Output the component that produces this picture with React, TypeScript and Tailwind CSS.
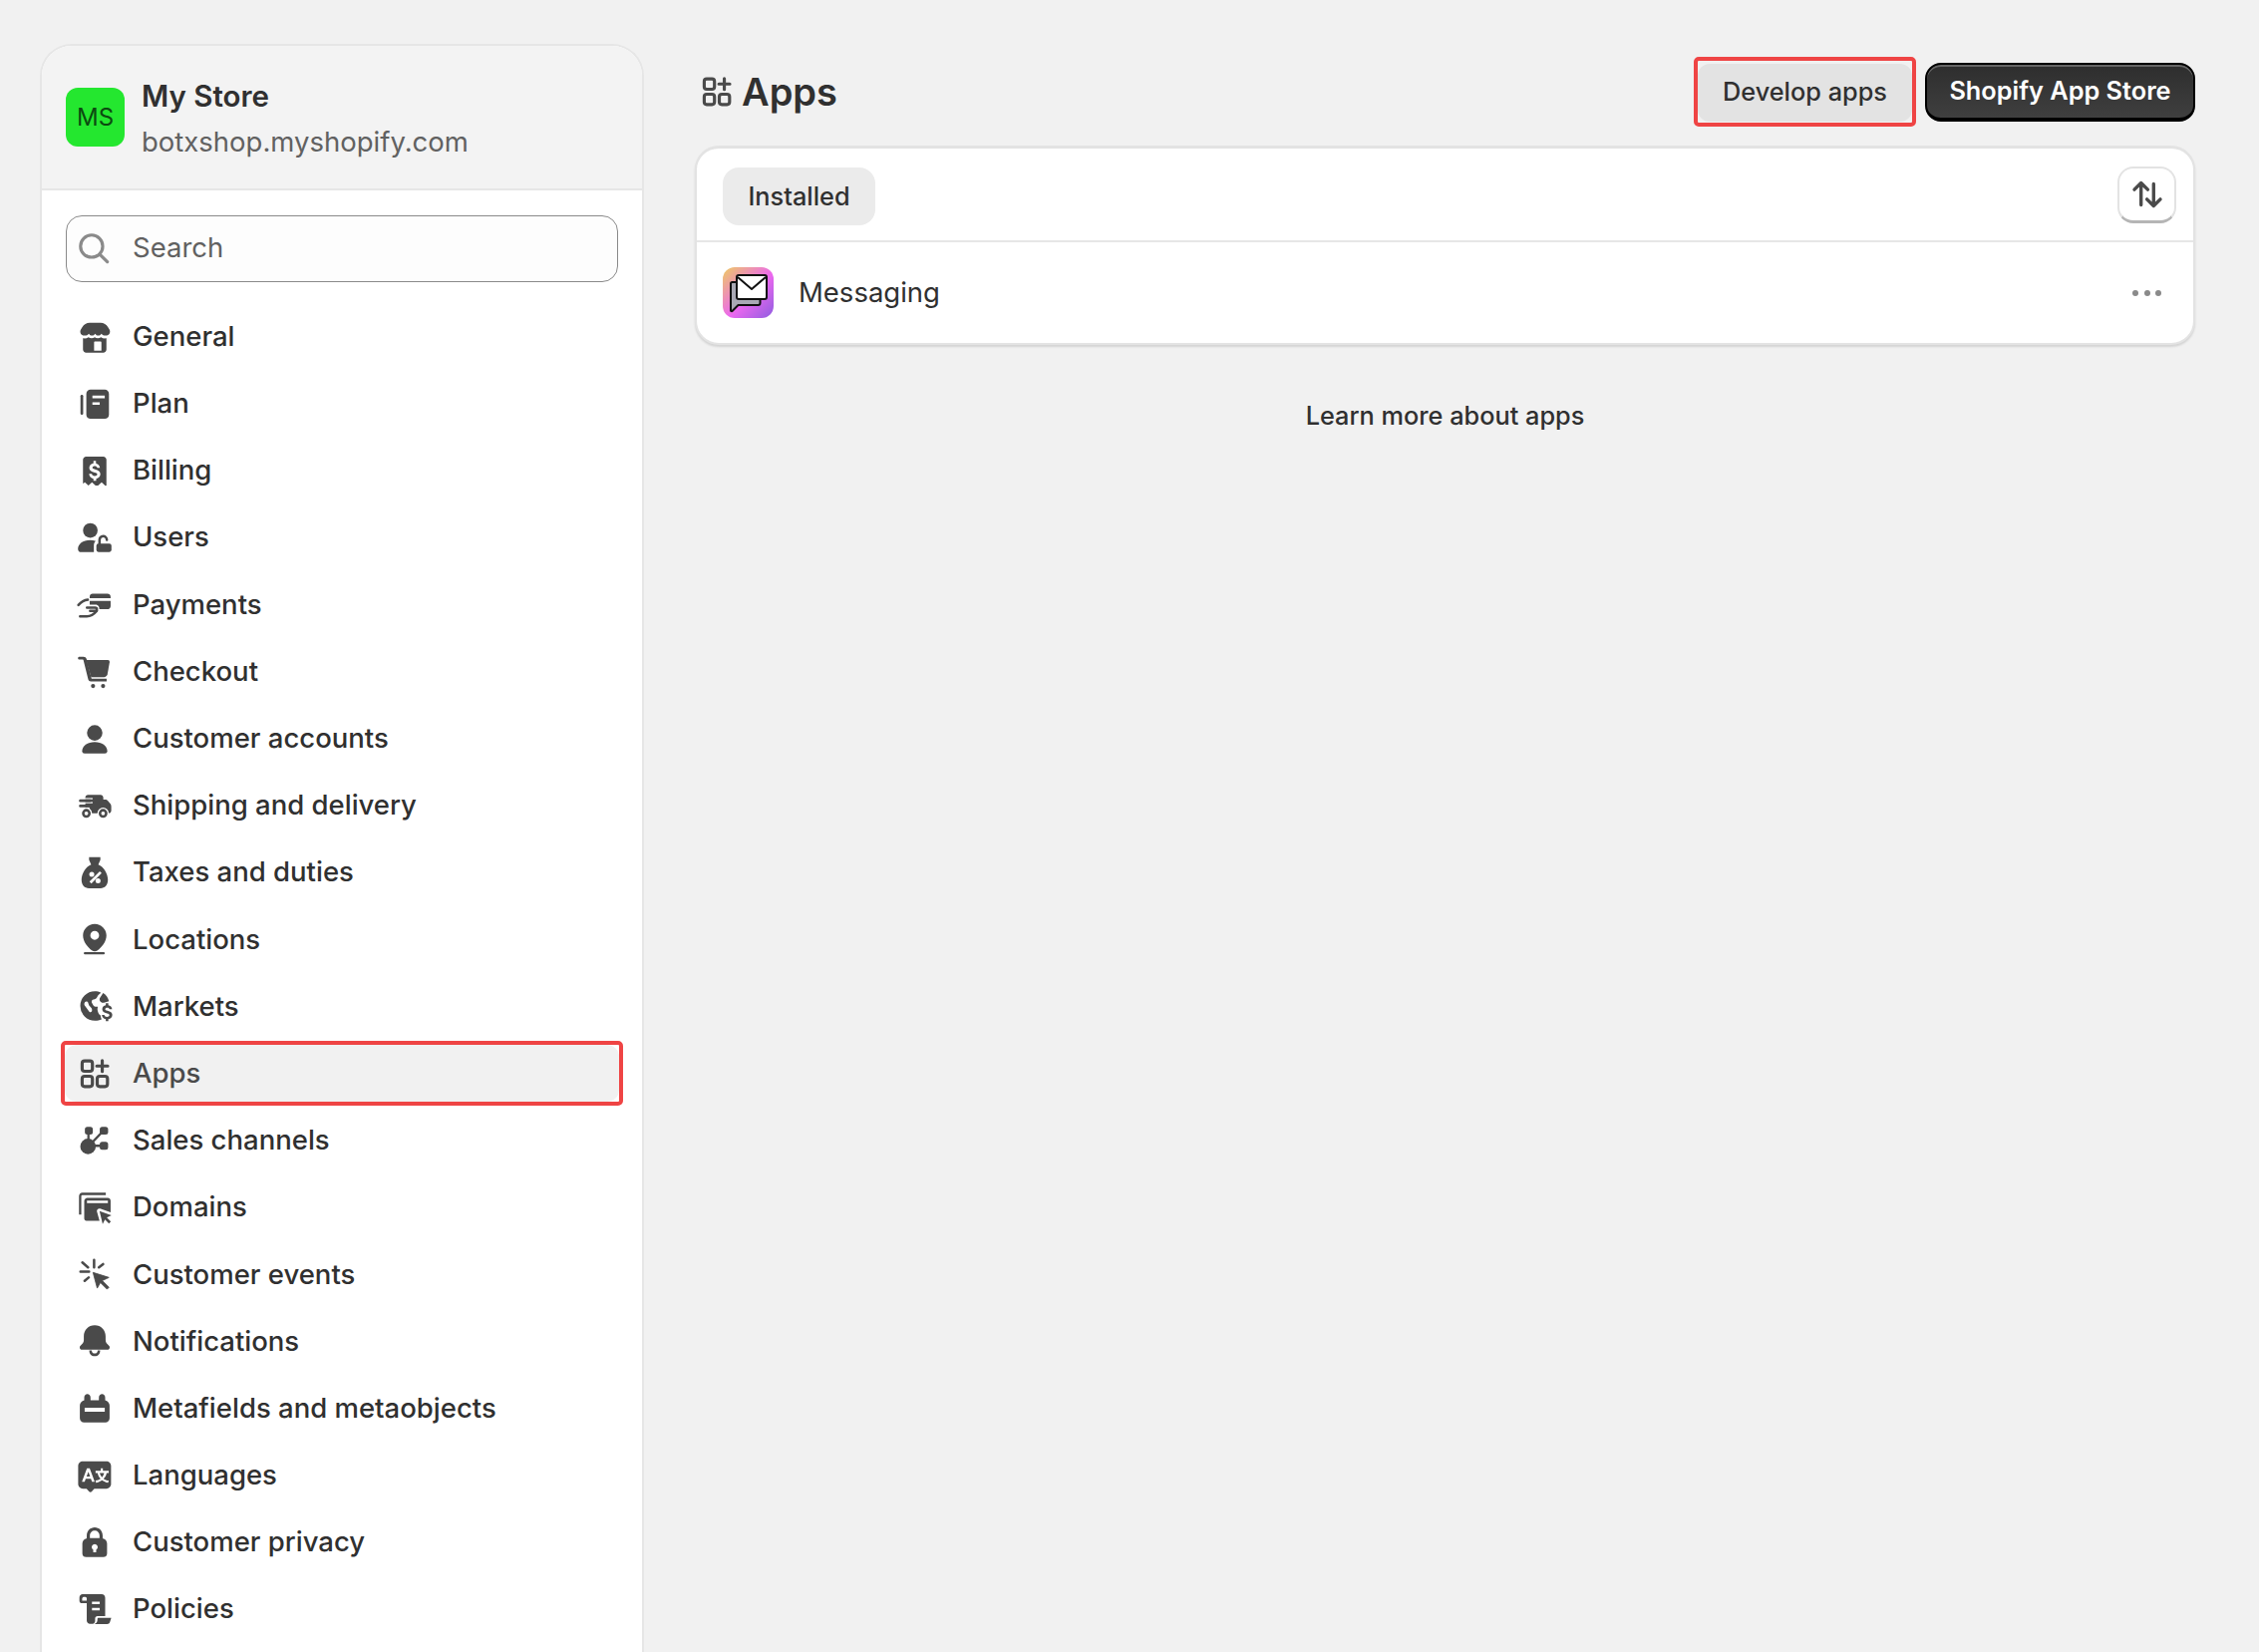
import type { ReactNode } from "react";

function Icon({ children, className = "" }: { children: ReactNode; className?: string }) {
  return (
    <svg viewBox="0 0 20 20" fill="#4a4a4a" className={`w-[42px] h-[42px] shrink-0 ${className}`}>
      {children}
    </svg>
  );
}

const AppsGlyph = (
  <g fill="none" stroke="#4a4a4a" strokeWidth="1.5" strokeLinecap="round" strokeLinejoin="round">
    <rect x="4" y="3.9" width="4.9" height="4.9" rx="1.2" />
    <rect x="4" y="11.2" width="4.9" height="4.9" rx="1.2" />
    <rect x="11.2" y="11.2" width="4.9" height="4.9" rx="1.2" />
    <path d="M13.6 3.7v5.2M11 6.3h5.2" />
  </g>
);

const icons: Record<string, ReactNode> = {
  General: (
    <>
      <path d="M7.2 3.200h5.600c1.500 0 2.800.8 3.500 2l.8 1.300c.6 1.300-.2 2.700-1.700 2.800-.9.100-1.700-.3-2.200-.9-.4.6-.9.9-1.500.9s-1.100-.3-1.500-.9c-.4.6-.9.9-1.500.9s-1.100-.3-1.500-.9c-.5.6-1.300 1-2.200.9-1.500-.1-2.300-1.500-1.700-2.800l.8-1.300c.7-1.200 2-2 3.500-2z" />
      <path fillRule="evenodd" d="M4.400 10.600c1 .2 1.900 0 2.600-.5.900.7 2.200.7 3 0 .8.700 2.100.7 3 0 .7.500 1.600.7 2.600.5V16c0 .8-.7 1.500-1.500 1.500H5.900c-.8 0-1.500-.7-1.500-1.500v-5.400zM9.700 12.700v3.800h3.500v-3.800c0-.3-.2-.5-.5-.5h-2.500c-.3 0-.5.2-.5.5z" />
    </>
  ),
  Plan: (
    <>
      <rect x="3.2" y="5.7" width="1.3" height="9.5" rx=".6" />
      <path fillRule="evenodd" d="M8 3.200h6.800c1.100 0 2 .9 2 2v10c0 1.100-.9 2-2 2H8c-1.100 0-2-.9-2-2v-10c0-1.100.9-2 2-2zm.9 2.900v1.300h5.900V6.100H8.900zm0 3.200v1.200h3.500V9.300H8.900z" />
    </>
  ),
  Billing: (
    <path fillRule="evenodd" d="M5.900 3.300h8.200c.8 0 1.500.7 1.500 1.500v12.300l-.5.200-1.800-1.700-1.700 1.600h-1.200L8.700 15.600 7 17.200l-1.700-1.600-.6.500-.3.100V4.800c0-.8.700-1.500 1.500-1.500zm4.800 2.100H9.400v1.100c-1.200.2-2 1.100-2 2.200 0 1.300 1 1.900 2.600 2.300.9.200 1.200.4 1.200.8 0 .5-.5.800-1.200.8s-1.300-.3-1.400-1H7.300c.1 1.300.9 2 2.100 2.300v1h1.300v-1c1.200-.2 2-1.100 2-2.200 0-1.300-1-1.900-2.600-2.300-.9-.2-1.200-.4-1.200-.8 0-.5.500-.8 1.100-.8.700 0 1.100.3 1.200.9h1.300c-.1-1.200-.9-1.900-1.900-2.200V5.400z" />
  ),
  Users: (
    <>
      <circle cx="7.900" cy="6.700" r="3.500" />
      <path d="M2 15.500c0-2.300 2.300-4.200 5.800-4.200 1 0 1.900.2 2.700.5-.6.500-.9 1.200-.9 2v3.200H3.100C2.500 17 2 16.400 2 15.500z" />
      <path d="M12.300 13.500v-2.300c0-1 .7-1.800 1.700-1.800s1.800.8 1.800 1.800" fill="none" stroke="#4a4a4a" strokeWidth="1.2" strokeLinecap="round" />
      <rect x="10.800" y="13" width="7.200" height="4" rx="1" />
    </>
  ),
  Payments: (
    <>
      <path d="M9 5h7.100c.8 0 1.500.6 1.500 1.500v.7H7.600v-.7C7.600 5.600 8.200 5 9 5zM7.600 8.400h10v2.500c0 .8-.7 1.500-1.500 1.500h-3.900c.1-.9-.4-2.200-1.800-2.200H7.600V8.400z" />
      <g fill="none" stroke="#4a4a4a" strokeWidth="1.2" strokeLinecap="round" strokeLinejoin="round">
        <path d="M2.200 10.400C3.500 9 5.100 8.100 6.700 7.900" />
        <path d="M6.300 11.700h3.900c1.100 0 1.100 1.500 0 1.500H7.800" />
        <path d="M3 15.800h3.200c1.700 0 3.300-.8 4.800-2.600" />
      </g>
    </>
  ),
  Checkout: (
    <>
      <path d="M2.600 3.200h2c.7 0 1.300.4 1.500 1.100l2.400 9.400h7.200V15H8.100c-.6 0-1-.3-1.200-.9L4.600 4.800c0-.2-.1-.3-.3-.3H2.600c-.4 0-.6-.3-.6-.6s.2-.7.600-.7z" />
      <path d="M5.900 4.800h10.400c.5 0 .9.400.8 1l-1 5.800c-.2.800-.9 1.400-1.700 1.400H8.300L5.900 4.800z" />
      <circle cx="9.200" cy="17.200" r="1" />
      <circle cx="14" cy="17.200" r="1" />
    </>
  ),
  "Customer accounts": (
    <>
      <circle cx="10" cy="7.200" r="3.700" />
      <path d="M4 15.800c0-2.400 2.600-4.300 6-4.300s6 1.900 6 4.300c0 .8-.5 1.200-1.200 1.200H5.200C4.500 17 4 16.600 4 15.800z" />
    </>
  ),
  "Shipping and delivery": (
    <>
      <path d="M6.800 4.900h6c.7 0 1.300.6 1.300 1.300v.9h.9c.5 0 1 .2 1.300.6l1.200 1.500c.3.400.4.800.4 1.200v2c0 .7-.5 1.300-1.200 1.300H5.500V6.200c0-.7.600-1.300 1.300-1.300z" />
      <rect x="4.800" y="6.400" width="4.200" height=".6" fill="#fff" />
      <rect x="4.800" y="8.300" width="4.200" height=".6" fill="#fff" />
      <rect x="4.800" y="10.900" width="2.700" height=".6" fill="#fff" />
      <rect x="2.500" y="7" width="5.900" height="1.300" rx=".6" />
      <rect x="2.500" y="9.500" width="4" height="1.300" rx=".6" />
      <circle cx="6" cy="13.700" r="2.700" fill="#fff" />
      <circle cx="14" cy="13.700" r="2.700" fill="#fff" />
      <circle cx="6" cy="13.700" r="1.500" fill="none" stroke="#4a4a4a" strokeWidth="1.200" />
      <circle cx="14" cy="13.700" r="1.500" fill="none" stroke="#4a4a4a" strokeWidth="1.200" />
    </>
  ),
  "Taxes and duties": (
    <path fillRule="evenodd" d="M7.300 2.700h5.400v1.400l-1 2.200c2.500.9 4.600 4.300 4.600 7.300 0 2.500-1.500 4-3.500 4H7.200c-2 0-3.500-1.500-3.500-4 0-3 2.100-6.400 4.600-7.300l-1-2.200V2.700zm5.100 6.800-4.900 4.900.9.900 4.900-4.900-.9-.9zM8.600 9.800a1.200 1.200 0 1 0 0 2.400 1.200 1.200 0 0 0 0-2.400zm3 3a1.200 1.200 0 1 0 0 2.400 1.200 1.200 0 0 0 0-2.400z" />
  ),
  Locations: (
    <>
      <path fillRule="evenodd" d="M10 2.700c3.100 0 5.600 2.500 5.600 5.500 0 2.900-2.200 5.700-4.400 7.300-.7.500-1.700.5-2.400 0-2.200-1.600-4.400-4.400-4.400-7.300 0-3 2.500-5.500 5.600-5.500zm0 3.400a2.100 2.100 0 1 0 0 4.200 2.100 2.100 0 0 0 0-4.200z" />
      <rect x="4.800" y="16.200" width="10" height="1.100" rx=".5" />
    </>
  ),
  Markets: (
    <>
      <path d="M10 3c1.100 0 2.100.2 3 .7-.8.500-1.500 1.300-1.800 2-.3.800-1 1.100-1.700 1.200-.9.100-1.200 1-.8 1.700l.6 1c.3.500.9.700 1.500.7h.7c-.2.700-.3 1.500 0 2.300.2.800.6 1.500 1.300 1.900.1.700.2 1.300.5 1.900-1 .4-2 .6-3.200.6a7 7 0 1 1 0-14zM5.400 8.100c-.5.500-.5 1.300-.1 1.800l2.100 2.800c.4.500 1.300.3 1.300-.4v-.6c0-.4-.2-.7-.4-.9l-1-1-.5-1.500c-.2-.5-1-.7-1.400-.2z" />
      <path d="M14 3.800c1.500.9 2.400 2.200 2.800 3.900l-2.400.7c-.7.200-1.500-.1-1.900-.8-.3-.6-.2-1.300.2-1.800L14 3.800z" />
      <path d="M15.300 8.700h1.200v1c1 .2 1.700.9 1.800 1.900h-1.200c-.1-.5-.5-.8-1.100-.8-.6 0-1 .3-1 .7 0 .4.300.6 1.100.8 1.500.4 2.300.9 2.300 2 0 1-.7 1.800-1.900 2v1h-1.200v-1c-1.100-.2-1.800-.9-1.900-2h1.200c.1.600.6.900 1.200.9.700 0 1.200-.3 1.200-.8 0-.4-.3-.6-1.100-.8-1.500-.4-2.300-.9-2.300-2 0-1 .7-1.700 1.700-1.900v-1z" />
    </>
  ),
  Apps: AppsGlyph,
  "Sales channels": (
    <>
      <rect x="5.300" y="3.400" width="3.800" height="3.800" rx="1.200" />
      <rect x="12.400" y="3.400" width="4" height="3.800" rx="1.200" />
      <rect x="12.400" y="10.600" width="4" height="3.800" rx="1.200" />
      <circle cx="6.800" cy="12.800" r="3.700" />
      <path d="M7 5v7.500M7 12.800 14 5.500M7 12.500h7" fill="none" stroke="#4a4a4a" strokeWidth="1.100" />
    </>
  ),
  Domains: (
    <>
      <path d="M4.100 3h11.200v1.200H4.100a.5.500 0 0 0-.5.500v8.800H2.500V4.700C2.500 3.800 3.200 3 4.100 3z" />
      <path fillRule="evenodd" d="M6.500 5.500h9.700c.8 0 1.400.6 1.400 1.400v5.500l-5-1.800c-.9-.3-1.800.6-1.500 1.500l1.200 4.300H6c-.6 0-1-.4-1-1V7c0-.8.700-1.500 1.500-1.500zm-.2 1.300V8h10V6.800h-10z" />
      <path d="M12.300 11.800 18 13.800l-2.200 1.100 1.900 1.900-.9.900-1.900-1.900-1.100 2.200-1.500-6.200z" />
    </>
  ),
  "Customer events": (
    <>
      <path d="m9.200 9.200 7.600 2.400-3.200 1.500 3.200 3.200-.9.900-3.200-3.200-1.500 2.700-2-7.500z" stroke="#4a4a4a" strokeWidth=".4" strokeLinejoin="round" />
      <path d="M9.700 3.200v3.600M3.200 8.800h4.100M4.100 4.400l2.700 2.400M14 5.200l-2 1.600M5.200 13.200l1.900-1.600" fill="none" stroke="#4a4a4a" strokeWidth="1.200" strokeLinecap="round" />
    </>
  ),
  Notifications: (
    <>
      <path d="M10 2.500c3 0 5.200 2.300 5.200 5.200v1.800c0 .8.300 1.400.8 1.900l.9 1c.6.700.1 1.800-.8 1.800H3.900c-.9 0-1.400-1.100-.8-1.800l.9-1c.5-.5.800-1.100.8-1.900V7.700c0-2.900 2.200-5.200 5.200-5.200z" />
      <path d="M7.400 14.500h1.200c0 1 .5 1.500 1.400 1.500s1.400-.5 1.400-1.500h1.200c0 1.800-1 2.800-2.600 2.800s-2.600-1-2.600-2.800z" />
    </>
  ),
  "Metafields and metaobjects": (
    <path fillRule="evenodd" d="M5 6V4.600C5 3.600 5.700 3 6.500 3s1.500.6 1.500 1.600V6h4V4.600c0-1 .7-1.600 1.500-1.600S15 3.600 15 4.600V6c1.200.3 2.100 1.300 2.100 2.500v6c0 1.200-.9 2-2 2H4.900c-1.100 0-2-.8-2-2v-6C2.900 7.300 3.800 6.300 5 6zm.2 3.500v1.900h9.600V9.500H5.200z" />
  ),
  Languages: (
    <path fillRule="evenodd" d="M4.300 3.200h11.300c1.200 0 2.200 1 2.200 2.200v8.700c0 1.200-1 2.200-2.200 2.200h-5.800l-1.300 1.400c-.3.300-.8.300-1.100 0l-1.300-1.400H4.300c-1.200 0-2.200-1-2.200-2.200V5.400c0-1.200 1-2.200 2.200-2.200zm3.300 3.300H6.300L3.900 13h1.300l.5-1.500h2.500l.5 1.500H10L7.600 6.500zm-.6 1.700.8 2.300H6.100l.9-2.300zm6.900-1.700H12.900v1.200H10.400v1.100h1c.2 1.100.7 2 1.400 2.700-.7.500-1.500.8-2.400.9l.2 1.100c1.100-.2 2.100-.6 2.900-1.200.8.600 1.800 1 2.900 1.200l.3-1.100c-1-.1-1.800-.4-2.500-.9.800-.7 1.300-1.600 1.500-2.700h1V7.700h-2.800V6.500zm.6 2.300c-.2.800-.5 1.400-1 2-.5-.6-.9-1.200-1.100-2h2.100z" />
  ),
  "Customer privacy": (
    <path fillRule="evenodd" d="M6.200 8.100V6.800c0-2.200 1.700-3.900 3.800-3.900s3.800 1.700 3.800 3.900v1.300c1.200.2 2.100 1.300 2.100 2.500v4.700c0 1.100-.8 1.700-1.800 1.700H5.900c-1 0-1.800-.6-1.800-1.700v-4.700c0-1.200.9-2.300 2.100-2.500zm1.500-.1h4.600V6.800c0-1.400-1-2.400-2.300-2.400S7.700 5.400 7.700 6.800V8zM10 10.800a1.500 1.500 0 0 0-.7 2.800v1.200h1.400v-1.200a1.500 1.500 0 0 0-.7-2.800z" />
  ),
  Policies: (
    <>
      <path fillRule="evenodd" d="M4.200 2.900h9.100c1 0 1.700.8 1.700 1.700v8.700h-3.600c-.8 0-1.200.6-1.200 1.100v1.200c0 .6-.3 1.200-1 1.400H7.700c-.8 0-1.500-.7-1.500-1.500V7.200H4c-.8 0-1.300-.5-1.300-1.300V4.500c0-.9.700-1.600 1.500-1.600zm.5 1.300c-.4.200-.7.500-.7.900v.9h2.200V5c0-.4-.3-.8-.7-.8h-.8zm4 2.200v1.200h3.700V6.400H8.700zm0 3v1.200h3.700V9.400H8.700z" />
      <path d="M11.900 14.200h6l-.6 1.900c-.2.600-.7 1.100-1.400 1.100H9.900c.8-.5 1.400-1.100 1.400-2v-.4c0-.4.200-.6.600-.6z" />
    </>
  ),
};

const navItems = [
  "General",
  "Plan",
  "Billing",
  "Users",
  "Payments",
  "Checkout",
  "Customer accounts",
  "Shipping and delivery",
  "Taxes and duties",
  "Locations",
  "Markets",
  "Apps",
  "Sales channels",
  "Domains",
  "Customer events",
  "Notifications",
  "Metafields and metaobjects",
  "Languages",
  "Customer privacy",
  "Policies",
];

function NavRow({ label }: { label: string }) {
  if (label === "Apps") {
    return (
      <div className="-mx-[5px] -my-[4.5px] border-4 border-[#ef4444] rounded-[5px]">
        <div className="flex items-center gap-[17px] h-[57px] pl-[9px] rounded-[12px] bg-[#f1f1f1] text-[#4a4a4a]">
          <Icon>{icons[label]}</Icon>
          <span>{label}</span>
        </div>
      </div>
    );
  }
  return (
    <div className="flex items-center gap-[17px] h-[56px] pl-2 text-[#303030]">
      <Icon>{icons[label]}</Icon>
      <span>{label}</span>
    </div>
  );
}

function MessagingIcon() {
  return (
    <svg viewBox="0 0 51 51" className="w-[51px] h-[51px] shrink-0">
      <defs>
        <linearGradient id="msgTile" x1="0" y1="0" x2="1" y2="1">
          <stop offset="0" stopColor="#eecb62" />
          <stop offset="0.55" stopColor="#ec68ef" />
          <stop offset="1" stopColor="#8f5de0" />
        </linearGradient>
      </defs>
      <rect width="51" height="51" rx="12" fill="url(#msgTile)" />
      <path
        d="M9.500 15h26a2 2 0 0 1 2 2v19a2 2 0 0 1-2 2H15.500l-5.500 5.500a1 1 0 0 1-2-.7V16.500a1.500 1.500 0 0 1 1.500-1.500z"
        fill="#a9a9b4"
        stroke="#111"
        strokeWidth="2"
        strokeLinejoin="round"
      />
      <rect x="14" y="8" width="30" height="24" rx="2" fill="#fff" stroke="#111" strokeWidth="2" />
      <path d="m15 10 14 12 14-12" fill="none" stroke="#111" strokeWidth="2" strokeLinejoin="round" />
    </svg>
  );
}

export default function App() {
  return (
    <div
      className="h-[1657px] overflow-hidden bg-[#f1f1f1] flex items-start pl-[40px] pt-[44px]"
      style={{ fontFamily: "Inter, 'Liberation Sans', sans-serif" }}
    >
      <aside className="w-[606px] h-[1613px] shrink-0 bg-white border-2 border-b-0 border-[#e6e6e6] rounded-t-[32px] overflow-hidden">
        <div className="h-[145px] bg-[#f3f3f3] border-b-2 border-[#e6e6e6] flex items-center gap-[17px] pl-[24px]">
          <div className="w-[59px] h-[59px] rounded-[12px] bg-[#24e72f] flex items-center justify-center text-[#0c4a10] text-[24px]">
            MS
          </div>
          <div className="flex flex-col gap-[12px] leading-[34px] pt-[3px]">
            <span className="text-[29.5px] font-semibold text-[#303030] h-[34px]">My Store</span>
            <span className="text-[27.5px] text-[#616161] h-[34px]">botxshop.myshopify.com</span>
          </div>
        </div>
        <div className="px-[24px] pt-[25px]">
          <div className="h-[67px] border-[1.5px] border-[#8a8a8a] rounded-[16px] bg-[#fdfdfd] flex items-center gap-[18px] pl-[6px] pb-[2px] text-[27.5px] text-[#616161]">
            <svg viewBox="0 0 20 20" className="w-[42px] h-[42px] shrink-0" fill="none" stroke="#8a8a8a" strokeWidth="1.5" strokeLinecap="round">
              <circle cx="9" cy="9" r="5.3" />
              <path d="m13 13 3.500 3.500" />
            </svg>
            <span>Search</span>
          </div>
          <nav className="flex flex-col gap-[11.2px] mt-[26.5px] text-[27.5px] font-medium">
            {navItems.map((label) => (
              <NavRow key={label} label={label} />
            ))}
          </nav>
        </div>
      </aside>

      <main className="w-[1505px] ml-[51px] shrink-0 pt-[13px]">
        <header className="h-[70px] flex items-center justify-between">
          <div className="flex items-center gap-[4px] text-[#303030] pl-[1px]">
            <Icon>{AppsGlyph}</Icon>
            <h1 className="text-[38px] font-semibold">Apps</h1>
          </div>
          <div className="flex items-center gap-[9px]">
            <div className="border-4 border-[#ef4444] rounded-[5px] pt-[3px] pb-[1px]">
              <button className="block w-[215px] h-[58px] pb-[2px] rounded-[12px] bg-[#e3e3e3] text-[25.3px] font-medium text-[#303030]">
                Develop apps
              </button>
            </div>
            <button className="w-[271px] h-[59px] rounded-[16px] bg-linear-to-b from-[#2e2e2e] to-[#3f3f3f] border-2 border-b-4 border-black shadow-[inset_0_2px_0_#666] text-white text-[25.3px] font-semibold">
              Shopify App Store
            </button>
          </div>
        </header>

        <section className="mt-[19px] bg-white rounded-[24px] border-2 border-t-[3px] border-[#e3e3e3] shadow-[0_2px_2px_#d4d4d4]">
          <div className="h-[94px] border-b-2 border-[#e6e6e6] flex items-center justify-between pl-[26px] pr-[17px]">
            <span className="mt-[3px] w-[153px] h-[58px] rounded-[16px] bg-[#ebebeb] flex items-center justify-center text-[25.3px] font-medium text-[#303030]">
              Installed
            </span>
            <button className="w-[59px] h-[57px] rounded-[16px] bg-white border-2 border-b-[3px] border-[#e3e3e3] border-b-[#b5b5b5] flex items-center justify-center">
              <svg viewBox="0 0 20 20" className="w-[42px] h-[42px]" fill="none" stroke="#4a4a4a" strokeWidth="1.6" strokeLinecap="round" strokeLinejoin="round">
                <path d="M7 15V4.500M3.800 7.700 7 4.500l3.200 3.200M13 5v10.500M9.800 12.300l3.200 3.200 3.200-3.200" />
              </svg>
            </button>
          </div>
          <div className="h-[101px] flex items-center pl-[26px] pr-[32px]">
            <MessagingIcon />
            <span className="ml-[25px] text-[27.5px] text-[#303030]">Messaging</span>
            <div className="ml-auto flex gap-[5.5px]">
              <span className="w-[6px] h-[6px] rounded-full bg-[#8a8a8a]" />
              <span className="w-[6px] h-[6px] rounded-full bg-[#8a8a8a]" />
              <span className="w-[6px] h-[6px] rounded-full bg-[#8a8a8a]" />
            </div>
          </div>
        </section>

        <p className="mt-[52px] text-center text-[25.3px] font-medium text-[#303030]">Learn more about apps</p>
      </main>
    </div>
  );
}
